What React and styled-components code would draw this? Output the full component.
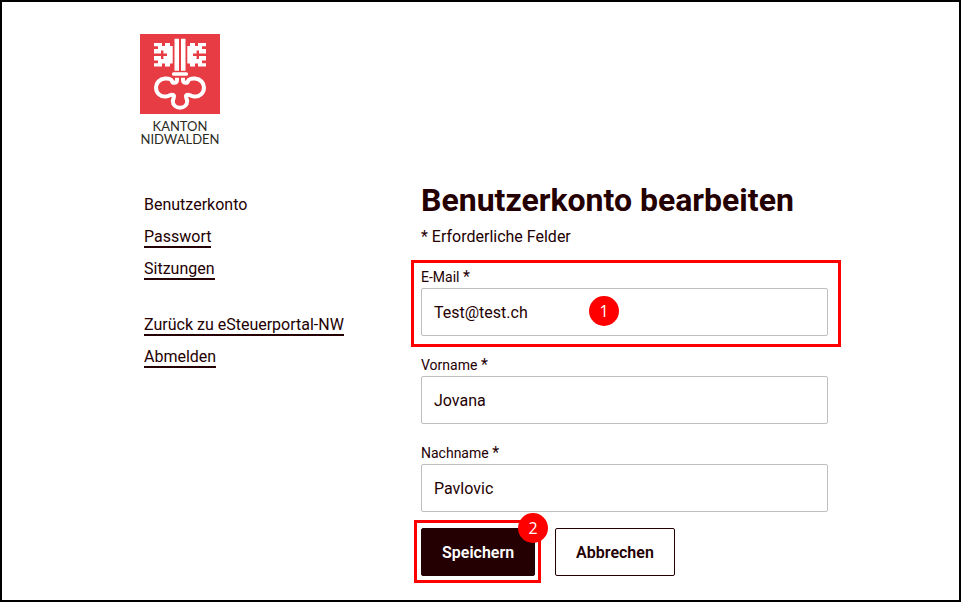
import styled, { createGlobalStyle } from "styled-components";
import { useState } from "react";

const GlobalStyle = createGlobalStyle`
  *, *::before, *::after {
    box-sizing: border-box;
  }

  body {
    margin: 0;
    background: #fff;
    color: #240002;
    font-family: Roboto, "Liberation Sans", sans-serif;
    font-size: 16px;
    line-height: 24px;
  }
`;

const Page = styled.div`
  min-height: 100vh;
  padding: 32px 131px 16px 138px;
  border: 2px solid #000;
`;

const Header = styled.header`
  display: flex;
`;

const Logo = styled.a`
  display: flex;
  flex-direction: column;
  align-items: center;
  gap: 6px;
  width: 80px;
  color: #2b2a1c;
  font-family: Lato, sans-serif;
  font-size: 13px;
  line-height: 13px;
  text-align: center;
  text-decoration: none;
`;

const LogoMark = styled.svg`
  display: block;
  width: 80px;
  height: 80px;
`;

const Layout = styled.div`
  display: grid;
  grid-template-columns: 277px 1fr;
  padding: 34px 0 0 4px;
`;

const Nav = styled.nav`
  display: flex;
  flex-direction: column;
  gap: 32px;
  padding-top: 12px;
`;

const NavList = styled.ul`
  display: flex;
  flex-direction: column;
  align-items: flex-start;
  gap: 8px;
  margin: 0;
  padding: 0;
  list-style: none;
`;

const NavItem = styled.li`
  height: 24px;
`;

const NavLink = styled.a`
  display: block;
  height: 24px;
  border-bottom: 2px solid ${(props) => (props.$current ? "transparent" : "#240002")};
  color: inherit;
  line-height: 26px;
  text-decoration: none;
`;

const Title = styled.h1`
  margin: 0;
  font-size: 32px;
  font-weight: 700;
  line-height: 40px;
`;

const Hint = styled.p`
  margin: 5px 0 15px;
`;

const Form = styled.form`
  display: flex;
  flex-direction: column;
  gap: 16px;
`;

const Field = styled.div`
  position: relative;
  display: flex;
  flex-direction: column;
`;

const Label = styled.label`
  padding-top: 2px;
  font-size: 14px;
  line-height: 22px;
`;

const Required = styled.span`
  font-size: 16px;
`;

const Input = styled.input`
  width: 100%;
  height: 48px;
  padding: 0 12px;
  border: 1px solid #bfbfbf;
  border-radius: 2px;
  background: #fff;
  color: inherit;
  font: inherit;
`;

const Actions = styled.div`
  display: flex;
  gap: 20px;
`;

const ButtonWrap = styled.div`
  position: relative;
`;

const Button = styled.button`
  height: 48px;
  padding: 2px 20px 0;
  border: 1px solid #240002;
  border-radius: 2px;
  background: ${(props) => (props.$primary ? "#240002" : "#fff")};
  color: ${(props) => (props.$primary ? "#fff" : "#240002")};
  font: inherit;
  font-weight: 600;
  cursor: pointer;
`;

//* red frame that lies around a highlighted part
const Highlight = styled.span`
  position: absolute;
  inset: ${(props) => props.$inset};
  border: 3px solid #f00;
  pointer-events: none;
`;

const Step = styled.span`
  position: absolute;
  top: ${(props) => props.$top};
  left: ${(props) => props.$left};
  display: grid;
  place-items: center;
  width: 30px;
  height: 30px;
  border-radius: 50%;
  background: #f00;
  color: #fff;
  font-family: "Open Sans", sans-serif;
  font-size: 16px;
  line-height: 24px;
`;

const fields = [
  { name: "email", label: "E-Mail", type: "email", step: 1 },
  { name: "firstName", label: "Vorname", type: "text" },
  { name: "lastName", label: "Nachname", type: "text" },
];

const navGroups = [
  [
    { label: "Benutzerkonto", href: "#account", current: true },
    { label: "Passwort", href: "#password" },
    { label: "Sitzungen", href: "#sessions" },
  ],
  [
    { label: "Zurück zu eSteuerportal-NW", href: "#portal" },
    { label: "Abmelden", href: "#logout" },
  ],
];

function KeyBit() {
  return (
    <path
      fill="#fff"
      d="M14 9h8v3h3V9h5v3h2.7v17.6H30v3h-5v-3h-3v3h-8v-3.3h4v-2.7h-4v-4.6h7v3h2.4v-3H27v-2.4h-3.6v-3H21v3h-7v-4.7h4v-2.7h-4z"
    />
  );
}

function CantonLogo() {
  return (
    <Logo href="#home">
      <LogoMark viewBox="0 0 80 80" aria-hidden="true">
        <rect width="80" height="80" fill="#e73c43" />
        <KeyBit />
        <g transform="matrix(-1 0 0 1 80 0)">
          <KeyBit />
        </g>
        <path fill="#fff" d="M34.5 4.7H39v32h-4.5zM41 4.7h4.5v32H41z" />
        <rect x="32" y="38.2" width="16" height="3.6" rx="1.5" fill="#fff" />
        <path
          fill="none"
          stroke="#fff"
          strokeWidth="4"
          strokeLinejoin="round"
          d="M37 43.8V46C37 49.5 32.5 49.5 32 47C31 44.5 28 44.4 25 44.5C19.5 45 16 49 16 53.5C16 59.5 21 63 26 62.4C30 62 30.5 60 33 60.8C35.5 62 33 64.5 32.8 67C32.8 71 36 73.7 40 73.7C44 73.7 47.2 71 47.2 67C47 64.5 44.5 62 47 60.8C49.5 60 50 62 54 62.4C59 63 64 59.5 64 53.5C64 49 60.5 45 55 44.5C52 44.4 49 44.5 48 47C47.5 49.5 43 49.5 43 46V43.8"
        />
      </LogoMark>
      <span>
        KANTON
        <br />
        NIDWALDEN
      </span>
    </Logo>
  );
}

function App() {
  const [values, setValues] = useState({
    email: "Test@test.ch",
    firstName: "Jovana",
    lastName: "Pavlovic",
  });

  function handleChange(e) {
    setValues({ ...values, [e.target.name]: e.target.value });
  }

  return (
    <>
      <GlobalStyle />
      <Page>
        <Header>
          <CantonLogo />
        </Header>
        <Layout>
          <Nav>
            {navGroups.map((group) => (
              <NavList key={group[0].label}>
                {group.map(({ label, href, current }) => (
                  <NavItem key={label}>
                    <NavLink href={href} $current={current}>
                      {label}
                    </NavLink>
                  </NavItem>
                ))}
              </NavList>
            ))}
          </Nav>
          <main>
            <Title>Benutzerkonto bearbeiten</Title>
            <Hint>* Erforderliche Felder</Hint>
            <Form onSubmit={(e) => e.preventDefault()}>
              {fields.map(({ name, label, type, step }) => (
                <Field key={name}>
                  <Label htmlFor={name}>
                    {label} <Required>*</Required>
                  </Label>
                  <Input
                    id={name}
                    name={name}
                    type={type}
                    value={values[name]}
                    onChange={handleChange}
                  />
                  {step && (
                    <>
                      <Highlight $inset="-4px -13px -11px -10px" />
                      <Step $top="32px" $left="168px">{step}</Step>
                    </>
                  )}
                </Field>
              ))}
              <Actions>
                <ButtonWrap>
                  <Button $primary type="submit">Speichern</Button>
                  <Highlight $inset="-8px -6px -7px -7px" />
                  <Step $top="-15px" $left="97px">2</Step>
                </ButtonWrap>
                <Button type="button">Abbrechen</Button>
              </Actions>
            </Form>
          </main>
        </Layout>
      </Page>
    </>
  );
}

export default App;
